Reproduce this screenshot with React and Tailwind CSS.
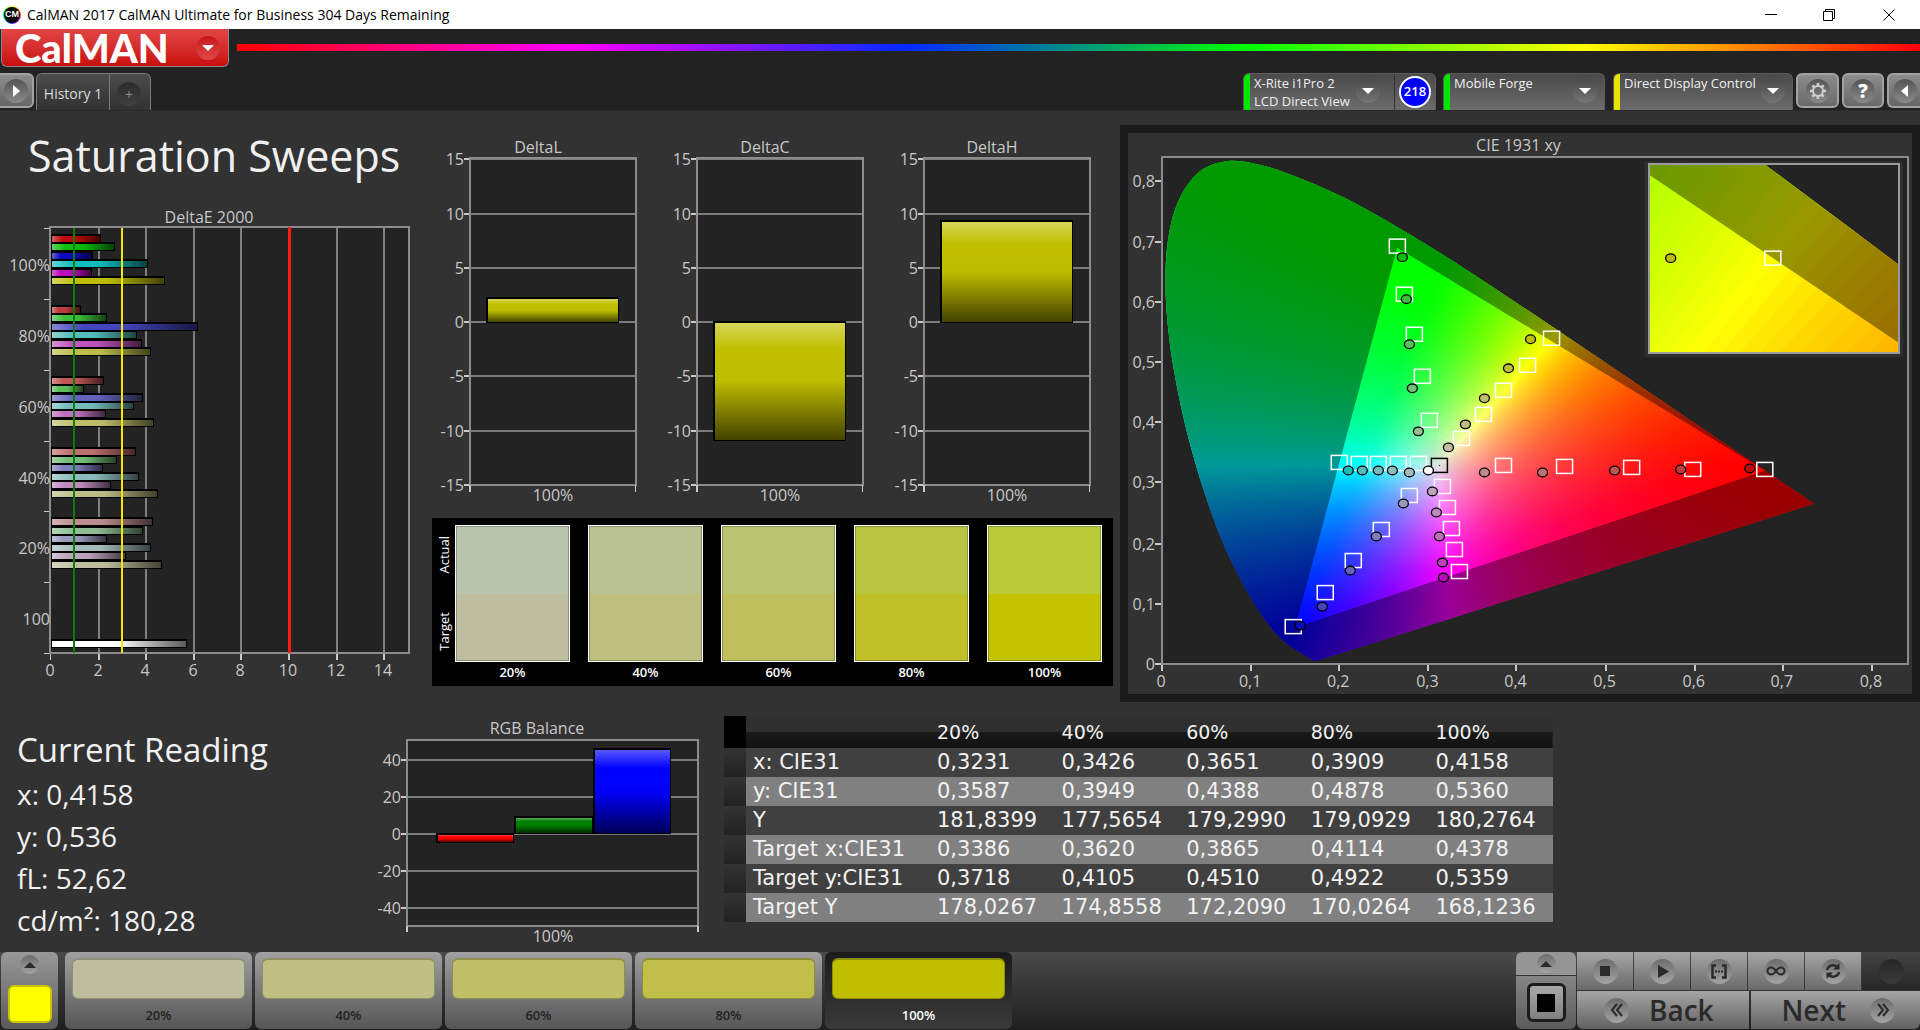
import React, { useMemo } from "react";

/* ---------- shared chart pieces ---------- */

const AXIS = "#c8c8c8";
const FONT = '"Open Sans", "Noto Sans", sans-serif';

function Gloss({ id, vertical }) {
  return (
    <linearGradient id={id} x1="0" y1="0" x2={vertical ? 0 : 1} y2={vertical ? 1 : 0}>
      <stop offset="0" stopColor="#fff" stopOpacity="0.35" />
      <stop offset="0.22" stopColor="#fff" stopOpacity="0" />
      <stop offset="0.5" stopColor="#000" stopOpacity="0.02" />
      <stop offset="1" stopColor="#000" stopOpacity="0.65" />
    </linearGradient>
  );
}

function GlossBar({ x, y, w, h, color, gloss }) {
  return (
    <g shapeRendering="crispEdges">
      <rect x={x} y={y} width={w} height={h} fill="#000" />
      <rect x={x + 2} y={y + 2} width={Math.max(w - 3, 0)} height={Math.max(h - 3, 0)} fill={color} />
      <rect x={x + 2} y={y + 2} width={Math.max(w - 3, 0)} height={Math.max(h - 3, 0)} fill={`url(#${gloss})`} />
    </g>
  );
}

function Label({ x, y, anchor = "middle", size = 16, children }) {
  return (
    <text x={x} y={y} textAnchor={anchor} fontSize={size} fill={AXIS} fontFamily={FONT}>
      {children}
    </text>
  );
}

/* ---------- DeltaE 2000 ---------- */

const DELTA_E = [
  { label: "100%", values: [2.09, 2.69, 1.75, 4.07, 1.73, 4.79], colors: ["#be0a0a", "#0abe0a", "#0a0abe", "#10bebe", "#be0abe", "#bebe0a"] },
  { label: "80%", values: [1.25, 2.35, 6.17, 3.61, 3.82, 4.2], colors: ["#be3c3c", "#3cbe3c", "#4444be", "#54bcbc", "#be54be", "#bebe4c"] },
  { label: "60%", values: [2.23, 1.38, 3.87, 3.49, 2.31, 4.33], colors: ["#be5656", "#5abe5a", "#6464be", "#74bcbc", "#be6ebe", "#bebe6a"] },
  { label: "40%", values: [3.57, 2.77, 2.17, 3.7, 2.52, 4.49], colors: ["#be7070", "#76be7a", "#7e7ebe", "#8cbcbc", "#be8abe", "#bebe84"] },
  { label: "20%", values: [4.28, 3.87, 2.35, 4.2, 3.15, 4.66], colors: ["#be8c8c", "#92be94", "#9a9abe", "#a6bcbc", "#bea4be", "#bebe9e"] },
  { label: "100", values: [null, null, null, null, null, null, 5.71], colors: ["", "", "", "", "", "", "#ffffff"] },
];

function DeltaEChart() {
  const left = 51;
  const right = 409;
  const top = 28;
  const bottom = 453;
  const step = (bottom - top) / 6;
  const px = (v) => Math.round(left + v * 23.8);
  return (
    <svg viewBox="0 0 432 490" className="block h-auto w-full" role="img" aria-label="DeltaE 2000">
      <defs><Gloss id="gloss-e" /></defs>
      <Label x={209} y={23}>DeltaE 2000</Label>
      <rect x={left} y={top} width={right - left} height={bottom - top} fill="#232323" />
      <g shapeRendering="crispEdges">
        {[2, 4, 6, 8, 10, 12, 14].map((v) => (
          <g key={v}>
            <rect x={px(v) - 1} y={top} width="2" height={bottom - top} fill="#808080" />
            <rect x={px(v) - 1} y={bottom + 1} width="2" height="6" fill={AXIS} />
          </g>
        ))}
        <rect x={left - 1} y={bottom} width="1" height="7" fill={AXIS} />
        {[0, 1, 2, 3, 4, 5, 6].map((i) => (
          <rect key={i} x={44} y={Math.round(top + i * step)} width="6" height="1" fill={AXIS} />
        ))}
      </g>
      {DELTA_E.map((g, gi) =>
        g.values.map((v, i) =>
          v === null ? null : (
            <GlossBar key={`${gi}-${i}`} x={left - 1} y={Math.round(top + gi * step + 6 + i * 8.45)} w={px(v) - left + 1} h={9} color={g.colors[i]} gloss="gloss-e" />
          )
        )
      )}
      <g shapeRendering="crispEdges">
        <rect x={left - 1} y={top - 1} width={right - left + 1} height={bottom - top + 1} fill="none" stroke="#8c8c8c" strokeWidth="2" />
        <rect x={73} y={top} width="2" height={bottom - top} fill="#0a7a0a" />
        <rect x={121} y={top} width="2" height={bottom - top} fill="#f0e800" />
        <rect x={288} y={top - 1} width="3" height={bottom - top + 1} fill="#ff1a1a" />
      </g>
      {DELTA_E.map((g, gi) => (
        <Label key={g.label} x={50} y={top + gi * step + 43} anchor="end">{g.label}</Label>
      ))}
      {[0, 2, 4, 6, 8, 10, 12, 14].map((v) => (
        <Label key={v} x={px(v) - 1} y={476}>{v}</Label>
      ))}
    </svg>
  );
}

/* ---------- DeltaL / DeltaC / DeltaH ---------- */

function DeltaChart({ title, value, id }) {
  const left = 38;
  const right = 204;
  const zero = 189;
  const unit = 10.85;
  const py = (v) => Math.round(zero - v * unit);
  const barTop = value > 0 ? py(value) - 1 : zero - 1;
  const barBottom = value > 0 ? zero + 1 : py(value);
  return (
    <svg viewBox="0 0 227 385" className="block h-auto w-full" role="img" aria-label={title}>
      <defs><Gloss id={id} vertical /></defs>
      <Label x={106} y={20}>{title}</Label>
      <rect x={left} y={24} width={right - left} height={py(-15) - 24} fill="#232323" />
      <g shapeRendering="crispEdges">
        {[15, 10, 5, 0, -5, -10, -15].map((v) => (
          <g key={v}>
            <rect x={left} y={py(v) - 1} width={right - left} height="2" fill="#7c7c7c" />
            <rect x={left - 6} y={py(v) - 1} width="6" height="2" fill={AXIS} />
          </g>
        ))}
        <rect x={left} y={25} width={right - left} height={py(-15) - 25} fill="none" stroke="#8c8c8c" strokeWidth="2" />
        <rect x={left - 1} y={py(-15)} width="2" height="7" fill={AXIS} />
        <rect x={right - 1} y={py(-15)} width="1" height="7" fill={AXIS} />
      </g>
      <GlossBar x={54} y={barTop} w={133} h={barBottom - barTop} color="#c0c000" gloss={id} />
      {[15, 10, 5, 0, -5, -10, -15].map((v) => (
        <Label key={v} x={32} y={py(v) + 6} anchor="end">{v}</Label>
      ))}
      <Label x={121} y={368}>100%</Label>
    </svg>
  );
}

/* ---------- RGB balance ---------- */

function RgbBalance() {
  const left = 37;
  const right = 328;
  const zero = 124;
  const py = (v) => Math.round(zero - v * 1.857);
  return (
    <svg viewBox="0 0 354 240" className="block h-auto w-full" role="img" aria-label="RGB Balance">
      <defs><Gloss id="gloss-rgb" vertical /></defs>
      <Label x={167} y={24}>RGB Balance</Label>
      <rect x={left} y={30} width={right - left} height={186} fill="#232323" />
      <g shapeRendering="crispEdges">
        {[40, 20, 0, -20, -40].map((v) => (
          <g key={v}>
            <rect x={left} y={py(v) - 1} width={right - left} height="2" fill="#7c7c7c" />
            <rect x={left - 6} y={py(v) - 1} width="6" height="2" fill={AXIS} />
          </g>
        ))}
        <rect x={left} y={30} width={right - left} height={186} fill="none" stroke="#8c8c8c" strokeWidth="2" />
        <rect x={left - 1} y={216} width="2" height="6" fill={AXIS} />
        <rect x={right - 1} y={216} width="2" height="6" fill={AXIS} />
      </g>
      <GlossBar x={66} y={zero - 1} w={78} h={py(-4.9) - zero + 1} color="#ff0000" gloss="gloss-rgb" />
      <GlossBar x={144} y={py(9.9)} w={79} h={zero - py(9.9)} color="#008000" gloss="gloss-rgb" />
      <GlossBar x={223} y={py(46.3)} w={78} h={zero - py(46.3)} color="#0000ff" gloss="gloss-rgb" />
      {[40, 20, 0, -20, -40].map((v) => (
        <Label key={v} x={31} y={py(v) + 6} anchor="end">{v}</Label>
      ))}
      <Label x={183} y={232}>100%</Label>
    </svg>
  );
}

/* ---------- CIE 1931 ---------- */

const LOCUS = [
  [0.1741, 0.005], [0.1714, 0.0051], [0.1689, 0.0069], [0.1644, 0.0109], [0.1566, 0.0177], [0.144, 0.0297],
  [0.1355, 0.0399], [0.1241, 0.0578], [0.1096, 0.0868], [0.0913, 0.1327], [0.0687, 0.2007], [0.0454, 0.295],
  [0.0235, 0.4127], [0.0082, 0.5384], [0.0039, 0.6548], [0.0139, 0.7502], [0.0389, 0.812], [0.0743, 0.8338],
  [0.1142, 0.8262], [0.1547, 0.8059], [0.1929, 0.7816], [0.2296, 0.7543], [0.3016, 0.6923], [0.3731, 0.6245],
  [0.4441, 0.5547], [0.5125, 0.4866], [0.5752, 0.4242], [0.627, 0.3725], [0.6658, 0.334], [0.6915, 0.3083],
  [0.719, 0.2809], [0.7347, 0.2653],
];
const X0 = 35;
const Y0 = 530;
const SX = 886;
const SY = 602;
const cx = (x) => X0 + x * SX;
const cy = (y) => Y0 - y * SY;
const WHITE = [cx(0.3127), cy(0.329)];

function locusPath() {
  const p = LOCUS.map(([x, y]) => [cx(x), cy(y)]);
  let d = `M${p[0][0]} ${p[0][1]}`;
  for (let i = 0; i < p.length - 1; i++) {
    const a = p[Math.max(i - 1, 0)];
    const b = p[i];
    const c = p[i + 1];
    const e = p[Math.min(i + 2, p.length - 1)];
    d += `C${b[0] + (c[0] - a[0]) / 6} ${b[1] + (c[1] - a[1]) / 6} ${c[0] - (e[0] - b[0]) / 6} ${c[1] - (e[1] - b[1]) / 6} ${c[0]} ${c[1]}`;
  }
  return d + "Z";
}

function chromaColor(px, py) {
  const x = (px - X0) / SX;
  const y = (Y0 - py) / SY;
  const z = 1 - x - y;
  const lin = [
    3.2406 * x - 1.5372 * y - 0.4986 * z,
    -0.9689 * x + 1.8758 * y + 0.0415 * z,
    0.0557 * x - 0.204 * y + 1.057 * z,
  ].map((v) => Math.max(v, 0));
  const m = Math.max(...lin, 0.0001);
  return `rgb(${lin.map((v) => Math.round((255 * v) / m)).join(",")})`;
}

const RADII = [0, 8, 16, 26, 38, 52, 68, 86, 108, 134, 164, 200, 240, 290, 350, 420];
const REACH = 420;

function buildFan() {
  const fan = [];
  for (let deg = 0; deg < 360; deg += 1) {
    const mid = ((deg + 0.5) * Math.PI) / 180;
    const a = (deg * Math.PI) / 180;
    const b = ((deg + 2) * Math.PI) / 180;
    const far = REACH * 1.4;
    fan.push({
      id: `hue-${deg}`,
      d: `M${WHITE[0]} ${WHITE[1]}L${WHITE[0] + far * Math.cos(a)} ${WHITE[1] + far * Math.sin(a)}L${WHITE[0] + far * Math.cos(b)} ${WHITE[1] + far * Math.sin(b)}Z`,
      stops: RADII.map((r) => [r / REACH, chromaColor(WHITE[0] + r * Math.cos(mid), WHITE[1] + r * Math.sin(mid))]),
    });
  }
  return fan;
}

const TARGETS = [
  [270, 113], [277, 161], [287, 201], [295, 243], [302, 287],
  [212, 329], [232, 330], [251, 330], [271, 330], [291, 330],
  [282, 362], [254, 396], [226, 427], [198, 459], [166, 493],
  [315, 353], [320, 374], [324, 395], [327, 416], [332, 438],
  [334, 305], [356, 281], [376, 257], [400, 232], [424, 205],
  [376, 332], [437, 333], [504, 334], [565, 336], [637, 336],
];

const READINGS = [
  [275, 124, "#0abe0a"], [279, 166, "#3cbe3c"], [282, 211, "#5abe5a"], [285, 255, "#76be7a"], [291, 298, "#92be94"],
  [221, 337, "#10bebe"], [235, 337, "#54bcbc"], [251, 337, "#74bcbc"], [265, 337, "#8cbcbc"], [282, 339, "#a6bcbc"],
  [276, 370, "#9a9abe"], [249, 403, "#7e7ebe"], [223, 437, "#6464be"], [195, 473, "#4444be"], [173, 492, "#0a0abe"],
  [305, 358, "#bea4be"], [309, 379, "#be8abe"], [312, 403, "#be6ebe"], [315, 429, "#be44be"], [316, 444, "#be0abe"],
  [321, 314, "#bebe9e"], [338, 291, "#bebe84"], [357, 265, "#bebe6a"], [381, 235, "#bebe3c"], [403, 206, "#bebe0a"],
  [357, 339, "#be8c8c"], [415, 339, "#be7070"], [487, 337, "#be5656"], [553, 336, "#be3c3c"], [622, 335, "#be0a0a"],
  [301, 337, "#ffffff"],
];

function Target({ x, y, color = "#fff" }) {
  return <rect x={x - 8} y={y - 7} width="16" height="14" fill="none" stroke={color} strokeWidth="1.5" />;
}

function Reading({ x, y, color }) {
  return <ellipse cx={x} cy={y} rx="5" ry="4.3" fill={color} stroke="#000" strokeWidth="1.3" />;
}

function CieChart() {
  const fan = useMemo(buildFan, []);
  const locus = useMemo(locusPath, []);
  const gamut = `M${cx(0.68)} ${cy(0.32)}L${cx(0.265)} ${cy(0.69)}L${cx(0.15)} ${cy(0.06)}Z`;
  const zx = 5.23;
  const zy = 5.81;
  const tx = 645 - zx * cx(0.4378);
  const ty = 125 - zy * cy(0.5359);
  return (
    <svg viewBox="1 0 783 560" className="block h-auto w-full" role="img" aria-label="CIE 1931 xy">
      <defs>
        {fan.map((w) => (
          <radialGradient key={w.id} id={w.id} gradientUnits="userSpaceOnUse" cx={WHITE[0]} cy={WHITE[1]} r={REACH}>
            {w.stops.map(([o, c], i) => (
              <stop key={i} offset={o} stopColor={c} />
            ))}
          </radialGradient>
        ))}
        <clipPath id="locus-clip"><path d={locus} /></clipPath>
        <clipPath id="inset-clip"><rect x="521" y="31" width="250" height="189" /></clipPath>
        <g id="chromaticity">
          <g clipPath="url(#locus-clip)">
            {fan.map((w) => (
              <path key={w.id} d={w.d} fill={`url(#${w.id})`} />
            ))}
            <path d={`M0 0H784V560H0Z${gamut}`} fillRule="evenodd" fill="#000" fillOpacity="0.4" />
          </g>
        </g>
      </defs>
      <Label x={391} y={18}>CIE 1931 xy</Label>
      <rect x="35" y="24" width="745" height="506" fill="#232323" />
      <use href="#chromaticity" />
      <rect x="35" y="24" width="745" height="506" fill="none" stroke="#8c8c8c" strokeWidth="2" shapeRendering="crispEdges" />
      {TARGETS.map(([x, y]) => <Target key={`${x}-${y}`} x={x} y={y} />)}
      <Target x={312} y={332} color="#000" />
      {READINGS.map(([x, y, c]) => <Reading key={`${x}-${y}`} x={x} y={y} color={c} />)}

      <rect x="517" y="28" width="258" height="196" fill="#2e2e2e" />
      <rect x="521" y="31" width="250" height="189" fill="#232323" />
      <g clipPath="url(#inset-clip)">
        <use href="#chromaticity" transform={`translate(${tx} ${ty}) scale(${zx} ${zy})`} />
      </g>
      <rect x="521" y="31" width="250" height="189" fill="none" stroke="#9a9a9a" strokeWidth="2" shapeRendering="crispEdges" />
      <Target x={645} y={125} />
      <Reading x={543} y={125} color="#bebe0a" />

      <g shapeRendering="crispEdges">
        {[0, 1, 2, 3, 4, 5, 6, 7, 8].map((v) => (
          <g key={v}>
            <rect x={Math.round(cx(v / 10)) - 1} y="531" width="2" height="6" fill={AXIS} />
            <rect x="28" y={Math.round(cy(v / 10)) - 1} width="6" height="2" fill={AXIS} />
          </g>
        ))}
      </g>
      {[0, 1, 2, 3, 4, 5, 6, 7, 8].map((v) => (
        <g key={v}>
          <Label x={Math.round(cx(v / 10)) - 1} y={553}>{v ? `0,${v}` : "0"}</Label>
          <Label x={28} y={Math.round(cy(v / 10)) + 6} anchor="end">{v ? `0,${v}` : "0"}</Label>
        </g>
      ))}
    </svg>
  );
}

/* ---------- small controls ---------- */

function Disc({ size = "size-6", children, tone = "bg-linear-to-b from-[#4a4a4a] to-[#757575]" }) {
  return <span className={`flex shrink-0 items-center justify-center rounded-full ${size} ${tone}`}>{children}</span>;
}

function Triangle({ dir = "down", className = "fill-white" }) {
  const d = { down: "M1 4H13L7 10Z", up: "M1 10H13L7 4Z", right: "M4 1V13L11 7Z", left: "M10 1V13L3 7Z" }[dir];
  return <svg viewBox="0 0 14 14" className={`size-3.5 ${className}`} aria-hidden="true"><path d={d} /></svg>;
}

function DeviceTab({ strip, lines, width, inset = "pr-[7px]", children }) {
  return (
    <div className={`flex h-[37px] overflow-hidden rounded-t-md border border-b-0 border-[#5c5c5c] bg-linear-to-b from-[#4a4a4a] to-[#6c6c6c] ${width}`}>
      <span className={`w-[6px] shrink-0 ${strip}`} />
      <button type="button" className={`flex min-w-0 flex-1 items-start justify-between pl-1 text-left ${inset}`}>
        <span className="text-[13px] leading-[18px] whitespace-nowrap text-[#f0f0f0]">
          {lines.map((l) => <span key={l} className="block">{l}</span>)}
        </span>
        <span className="-ml-6 mt-[5px]"><Disc><Triangle /></Disc></span>
      </button>
      {children}
    </div>
  );
}

function SquareButton({ label, children, className = "" }) {
  return (
    <button type="button" aria-label={label} className={`flex h-[35px] items-center justify-center rounded-md border-2 border-[#a2a2a2] bg-linear-to-b from-[#8c8c8c] to-[#6a6a6a] ${className}`}>
      <Disc tone="bg-linear-to-b from-[#555] to-[#8a8a8a]">{children}</Disc>
    </button>
  );
}

const DARK_ICON = "size-6";

function StopIcon() {
  return <svg viewBox="0 0 24 24" className={DARK_ICON}><rect x="7" y="7" width="10" height="10" fill="#2a2a2a" /></svg>;
}
function PlayIcon() {
  return <svg viewBox="0 0 24 24" className={DARK_ICON}><path d="M8 6V19L19 12.500Z" fill="#2a2a2a" /></svg>;
}
function BracketIcon() {
  return (
    <svg viewBox="0 0 24 24" className={DARK_ICON} fill="none" stroke="#2a2a2a" strokeWidth="2.500">
      <path d="M9 6.500H5.500V18.500H9M15 6.500H18.500V18.500H15" />
      <path d="M8 12.500H10M11 12.500H13M14 12.500H16" strokeWidth="2" />
    </svg>
  );
}
function LoopIcon() {
  return (
    <svg viewBox="0 0 24 24" className={DARK_ICON} fill="none" stroke="#2a2a2a" strokeWidth="2">
      <path d="M12 12C10 9 8.500 8.500 7 8.500A3.500 3.500 0 0 0 7 15.500C8.500 15.500 10 15 12 12C14 9 15.500 8.500 17 8.500A3.500 3.500 0 0 1 17 15.500C15.500 15.500 14 15 12 12Z" />
    </svg>
  );
}
function RefreshIcon() {
  return (
    <svg viewBox="0 0 24 24" className={DARK_ICON} fill="none" stroke="#2a2a2a" strokeWidth="2.500">
      <path d="M6 11A6 6 0 0 1 16 8" />
      <path d="M18 13A6 6 0 0 1 8 16" />
      <path d="M18.500 4V10.500H12Z" fill="#2a2a2a" stroke="none" />
      <path d="M5.500 20V13.500H12Z" fill="#2a2a2a" stroke="none" />
    </svg>
  );
}
function Chevrons({ flip }) {
  return (
    <svg viewBox="0 0 24 24" className={`size-6 ${flip ? "rotate-180" : ""}`} fill="none" stroke="#2a2a2a" strokeWidth="2">
      <path d="M12 6L7 12L12 18M17 6L12 12L17 18" />
    </svg>
  );
}

const LIGHT_DISC = "bg-linear-to-b from-[#6c6c6c] to-[#a4a4a4]";

function TransportButton({ label, children }) {
  return (
    <button type="button" aria-label={label} className="flex flex-1 items-center justify-center bg-linear-to-b from-[#a6a6a6] to-[#6a6a6a]">
      <Disc size="size-[25px]" tone={LIGHT_DISC}>{children}</Disc>
    </button>
  );
}

/* ---------- page data ---------- */

const SWATCHES = [
  { label: "20%", actual: "bg-[#b9c4ac]", target: "bg-[#bfbe9e]", tab: "bg-[#bfbf9f]" },
  { label: "40%", actual: "bg-[#b9c290]", target: "bg-[#bfbf80]", tab: "bg-[#bfbf84]" },
  { label: "60%", actual: "bg-[#b9c56e]", target: "bg-[#bfbf5e]", tab: "bg-[#bfbf68]" },
  { label: "80%", actual: "bg-[#b9c641]", target: "bg-[#bfbf28]", tab: "bg-[#bfbf4a]" },
  { label: "100%", actual: "bg-[#b9cc38]", target: "bg-[#c3c300]", tab: "bg-[#bfbf00]" },
];

const ROWS = [
  ["x: CIE31", "0,3231", "0,3426", "0,3651", "0,3909", "0,4158"],
  ["y: CIE31", "0,3587", "0,3949", "0,4388", "0,4878", "0,5360"],
  ["Y", "181,8399", "177,5654", "179,2990", "179,0929", "180,2764"],
  ["Target x:CIE31", "0,3386", "0,3620", "0,3865", "0,4114", "0,4378"],
  ["Target y:CIE31", "0,3718", "0,4105", "0,4510", "0,4922", "0,5359"],
  ["Target Y", "178,0267", "174,8558", "172,2090", "170,0264", "168,1236"],
];

/* ---------- page sections ---------- */

function TitleBar() {
  return (
    <header className="flex h-[29px] items-center bg-white text-black">
      <span className="ml-[3px] flex size-[18px] items-center justify-center rounded-full bg-[conic-gradient(#ff0,#f80,#f0f,#40f,#0ff,#0f0,#ff0)]">
        <span className="flex size-4 items-center justify-center rounded-full bg-black font-['Liberation_Sans'] text-[9px] font-bold text-white">CM</span>
      </span>
      <h2 className="ml-[6px] font-['Open_Sans'] text-[14px]">CalMAN 2017 CalMAN Ultimate for Business 304 Days Remaining</h2>
      <div className="ml-auto flex h-full">
        <button type="button" aria-label="Minimize" className="flex w-[58px] items-center justify-center">
          <svg viewBox="0 0 12 12" className="size-3" stroke="#000" fill="none"><path d="M0 5.500H12" /></svg>
        </button>
        <button type="button" aria-label="Restore" className="flex w-[58px] items-center justify-center">
          <svg viewBox="0 0 14 14" className="size-3.5" stroke="#000" fill="none"><path d="M1.500 3.500H10.500V12.500H1.500ZM3.500 3.500V1.500H12.500V10.500H10.500" /></svg>
        </button>
        <button type="button" aria-label="Close" className="flex w-[62px] items-center justify-center">
          <svg viewBox="0 0 12 12" className="size-3" stroke="#000" fill="none"><path d="M0.500 0.500L11.500 11.500M11.500 0.500L0.500 11.500" /></svg>
        </button>
      </div>
    </header>
  );
}

function BrandRow() {
  return (
    <div className="flex h-[44px] items-start">
      <button type="button" className="ml-px flex h-[38px] w-[228px] items-center rounded-b-md border border-t-0 border-[#8a8a8a] bg-linear-to-b from-[#e24444] to-[#c90a0a] pl-[13px] pr-2">
        <span className="flex-1 text-left font-['Lato'] text-[40px] leading-[38px] font-black text-white">CalMAN</span>
        <Disc tone="bg-linear-to-b from-[#c8101a] to-[#e04848]"><Triangle /></Disc>
      </button>
      <div className="mt-[15px] ml-2 h-[7px] flex-1 bg-[linear-gradient(to_right,#f00,#f0f_20%,#002aff_40%,#0f0_60%,#ff0_80%,#f00)]" />
    </div>
  );
}

function TabRow() {
  return (
    <div className="flex h-[37px] items-start">
      <button type="button" aria-label="Expand" className="flex h-[35px] w-[34px] items-center justify-center rounded-r-md border-2 border-l-0 border-[#a2a2a2] bg-linear-to-b from-[#8c8c8c] to-[#666]">
        <Disc tone="bg-linear-to-b from-[#555] to-[#8a8a8a]"><Triangle dir="right" /></Disc>
      </button>
      <div className="ml-[2px] flex h-[37px] rounded-t-md border border-b-0 border-[#7a7a7a] bg-linear-to-b from-[#4c4c4c] to-[#323232]">
        <button type="button" className="w-[73px] border-r border-[#7a7a7a] pt-0.5 text-center text-[14px] text-[#d8d8d8]">History 1</button>
        <button type="button" aria-label="Add tab" className="flex w-[40px] items-center pt-1 pl-[7px]">
          <Disc tone="bg-linear-to-b from-[#2c2c2c] to-[#404040]"><span className="text-[14px] text-[#8a8a8a]">+</span></Disc>
        </button>
      </div>

      <div className="ml-auto flex items-start">
        <DeviceTab strip="bg-[#00e800]" width="w-[193px]" inset="pr-[14px]" lines={["X-Rite i1Pro 2", "LCD Direct View"]}>
          <span className="flex w-[41px] items-center justify-center border-l border-[#333]">
            <span className="flex size-8 items-center justify-center rounded-full border-2 border-white bg-[#0000ff] text-[13px] font-semibold text-white">218</span>
          </span>
        </DeviceTab>
        <div className="ml-[7px]"><DeviceTab strip="bg-[#00e800]" width="w-[162px]" lines={["Mobile Forge"]} /></div>
        <div className="ml-2"><DeviceTab strip="bg-[#e8e400]" width="w-[180px]" lines={["Direct Display Control"]} /></div>
        <SquareButton label="Settings" className="ml-[3px] w-[43px]">
          <svg viewBox="0 0 20 20" className="size-5" fill="none" stroke="#d0d0d0" strokeWidth="2">
            <circle cx="10" cy="10" r="5" />
            <path d="M10 5V2M10 15V18M5 10H2M15 10H18M6.500 6.500L4.400 4.400M13.500 6.500L15.600 4.400M6.500 13.500L4.400 15.600M13.500 13.500L15.600 15.600" strokeWidth="2.600" />
          </svg>
        </SquareButton>
        <SquareButton label="Help" className="ml-[3px] w-[42px]"><span className="text-[19px] leading-6 font-extrabold text-white">?</span></SquareButton>
        <button type="button" aria-label="Collapse" className="ml-[3px] flex h-[35px] w-[33px] items-center justify-center rounded-l-md border-2 border-r-0 border-[#a2a2a2] bg-linear-to-b from-[#8c8c8c] to-[#666]">
          <Disc tone="bg-linear-to-b from-[#555] to-[#8a8a8a]"><Triangle dir="left" /></Disc>
        </button>
      </div>
    </div>
  );
}

function SwatchPanel() {
  return (
    <div className="flex h-[168px] bg-black pt-[7px] pr-[11px] text-[13px] text-white">
      <div className="flex h-[137px] w-[23px] flex-col items-center justify-between py-[11px] font-medium">
        <span className="rotate-180 [writing-mode:vertical-rl] leading-[22px]">Actual</span>
        <span className="rotate-180 [writing-mode:vertical-rl] leading-[22px]">Target</span>
      </div>
      <div className="grid flex-1 grid-cols-5 gap-[18px]">
        {SWATCHES.map((s) => (
          <div key={s.label}>
            <div className="flex h-[137px] flex-col border border-white">
              <div className={`flex-1 border border-b-0 border-black/25 ${s.actual}`} />
              <div className={`flex-1 border border-t-0 border-black/25 ${s.target}`} />
            </div>
            <p className="text-center leading-5 font-semibold">{s.label}</p>
          </div>
        ))}
      </div>
    </div>
  );
}

function ReadingTable() {
  return (
    <table className="w-full table-fixed border-collapse text-left font-['DejaVu_Sans'] text-[21px] text-[#f2f2f2]">
      <colgroup>
        <col className="w-[22px]" />
        <col className="w-[184px]" />
        <col /><col /><col /><col /><col />
      </colgroup>
      <thead>
        <tr className="h-8 bg-[linear-gradient(#2f2f2f_0_50%,#1a1a1a_50%,#121212)]">
          <td className="bg-black" />
          <td />
          {SWATCHES.map((s) => <th key={s.label} scope="col" className="p-0 pl-[7px] text-[19px] leading-8 font-normal">{s.label}</th>)}
        </tr>
      </thead>
      <tbody>
        {ROWS.map(([name, ...cells]) => (
          <tr key={name} className="h-[29px] odd:bg-[#404040] even:bg-[#808080]">
            <td className="bg-linear-to-b from-[#333] to-[#222]" />
            <th scope="row" className="p-0 pl-[7px] leading-[29px] font-normal whitespace-nowrap">{name}</th>
            {cells.map((c, i) => <td key={i} className="p-0 pl-[7px] leading-[29px]">{c}</td>)}
          </tr>
        ))}
      </tbody>
    </table>
  );
}

function BottomBar() {
  return (
    <footer className="flex h-[78px] bg-linear-to-b from-[#4a4a4a] to-[#1f1f1f]">
      <div className="ml-px flex h-[77px] w-[57px] flex-col items-center rounded-md bg-linear-to-b from-[#999] to-[#5a5a5a] pt-[3px]">
        <button type="button" aria-label="Expand patterns"><Disc size="size-[19px]" tone={LIGHT_DISC}><Triangle dir="up" className="fill-[#2a2a2a]" /></Disc></button>
        <button type="button" aria-label="Yellow pattern" className="mt-[11px] h-[38px] w-11 rounded-md border-2 border-[#c8c400] bg-[#ffff00]" />
      </div>
      <div className="ml-[7px] flex gap-[3px]">
        {SWATCHES.map((s, i) => {
          const active = i === SWATCHES.length - 1;
          return (
            <button
              key={s.label}
              type="button"
              aria-pressed={active}
              className={`flex h-[77px] w-[187px] flex-col rounded-md px-[7px] pt-[6px] text-[13px] font-semibold ${active ? "bg-linear-to-b from-[#1c1c1c] to-[#3a3a3a] text-white" : "bg-linear-to-b from-[#a0a0a0] to-[#565656] text-[#222]"}`}
            >
              <span className={`h-[46px] w-full rounded-md border border-t-2 border-black/25 ${s.tab}`} />
              <span className="w-full pt-0.5 text-center leading-7">{s.label}</span>
            </button>
          );
        })}
      </div>
      <div className="flex-1" />
      <div className="flex h-[77px] w-[60px] flex-col overflow-hidden rounded-md bg-[#333]">
        <button type="button" aria-label="Expand transport" className="flex h-[23px] items-center justify-center bg-[#959595]">
          <Disc size="size-[19px]" tone={LIGHT_DISC}><Triangle dir="up" className="fill-[#2a2a2a]" /></Disc>
        </button>
        <button type="button" aria-label="Stop sequence" className="mt-px flex flex-1 items-center justify-center bg-linear-to-b from-[#858585] to-[#5c5c5c]">
          <span className="flex size-[39px] items-center justify-center rounded-md border-3 border-[#1c1c1c] bg-linear-to-b from-[#a8a8a8] to-[#808080]">
            <span className="size-[18px] bg-black" />
          </span>
        </button>
      </div>
      <div className="flex h-[77px] w-[344px] flex-col gap-px pl-px">
        <div className="flex h-[38px] gap-px">
          <TransportButton label="Stop"><StopIcon /></TransportButton>
          <TransportButton label="Play"><PlayIcon /></TransportButton>
          <TransportButton label="Series"><BracketIcon /></TransportButton>
          <TransportButton label="Continuous"><LoopIcon /></TransportButton>
          <TransportButton label="Refresh"><RefreshIcon /></TransportButton>
          <button type="button" aria-label="Record" disabled className="flex w-[58px] items-center justify-center bg-linear-to-b from-[#444] to-[#272727]">
            <Disc size="size-[25px]" tone="bg-linear-to-b from-[#262626] to-[#3a3a3a]" />
          </button>
        </div>
        <div className="flex flex-1 gap-[2px] text-[28px] leading-8 font-semibold text-[#2a2a2a]">
          <button type="button" className="flex flex-1 items-center gap-5 rounded-bl-md bg-linear-to-b from-[#a6a6a6] to-[#626262] pl-[27px]">
            <Disc size="size-[25px]" tone={LIGHT_DISC}><Chevrons /></Disc>Back
          </button>
          <button type="button" className="flex flex-1 items-center justify-end gap-6 rounded-br-md bg-linear-to-b from-[#a6a6a6] to-[#626262] pr-[25px]">
            Next<Disc size="size-[25px]" tone={LIGHT_DISC}><Chevrons flip /></Disc>
          </button>
        </div>
      </div>
    </footer>
  );
}

export default function App() {
  return (
    <div className="flex min-h-screen flex-col bg-[#222] font-['Open_Sans',sans-serif]">
      <TitleBar />
      <BrandRow />
      <TabRow />
      <main className="flex-1 border-t border-[#2a2a2a] bg-[#323232]">
        <div className="grid grid-cols-[432fr_688fr_800fr] items-start">
          <section className="pt-4">
            <h1 className="pl-7 text-[43px] leading-[58px] whitespace-nowrap text-[#f0f0f0]">Saturation Sweeps</h1>
            <div className="mt-[15px]"><DeltaEChart /></div>
          </section>
          <section className="pt-[22px] pr-[7px]">
            <div className="grid grid-cols-3">
              <DeltaChart id="gloss-l" title="DeltaL" value={2.2} />
              <DeltaChart id="gloss-c" title="DeltaC" value={-11} />
              <DeltaChart id="gloss-h" title="DeltaH" value={9.3} />
            </div>
            <SwatchPanel />
          </section>
          <section className="mt-[14px] border-8 border-[#1a1a1a] bg-[#323232]">
            <CieChart />
          </section>
        </div>
        <div className="grid grid-cols-[370fr_354fr_829fr_367fr] items-start">
          <section className="pt-[25px] pl-[17px] text-[28px] leading-[42px] whitespace-nowrap text-[#f0f0f0]">
            <h2 className="text-[33px] leading-[46px]">Current Reading</h2>
            <p>x: 0,4158</p>
            <p>y: 0,536</p>
            <p>fL: 52,62</p>
            <p>cd/m²: 180,28</p>
          </section>
          <section className="pt-2"><RgbBalance /></section>
          <section className="pt-[14px]"><ReadingTable /></section>
        </div>
      </main>
      <BottomBar />
    </div>
  );
}
